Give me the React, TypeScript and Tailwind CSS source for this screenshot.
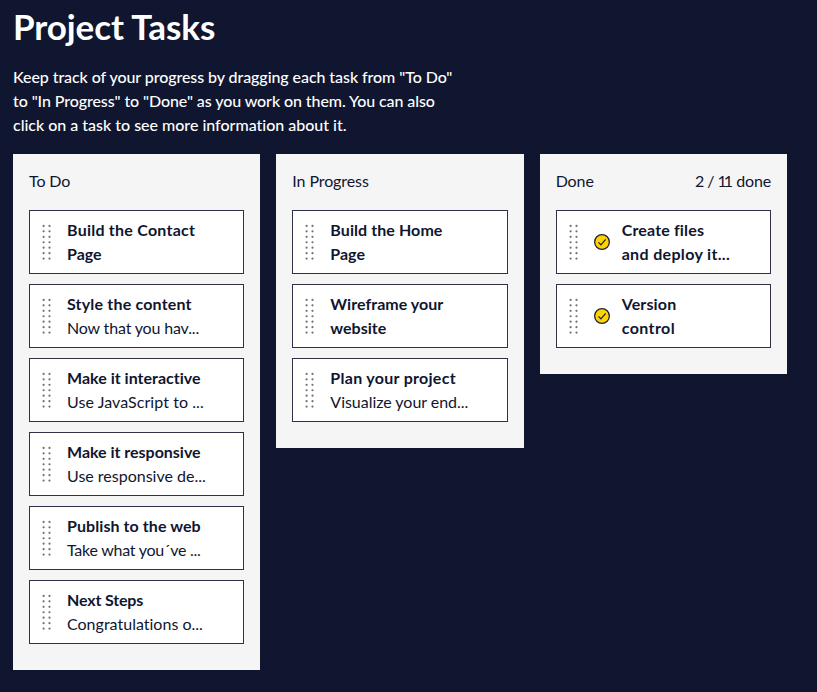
import React from "react";

type Line = { text: string; className?: string };
type Task = { title: Line[]; note?: Line; done?: boolean };

const todo: Task[] = [
  { title: [{ text: "Build the Contact", className: "tracking-[0.24px]" }, { text: "Page" }] },
  {
    title: [{ text: "Style the content", className: "tracking-[0.18px]" }],
    note: { text: "Now that you hav...", className: "tracking-[-0.16px]" },
  },
  {
    title: [{ text: "Make it interactive", className: "tracking-[0.01px]" }],
    note: { text: "Use JavaScript to ...", className: "tracking-[0.07px]" },
  },
  {
    title: [{ text: "Make it responsive", className: "tracking-[-0.02px]" }],
    note: { text: "Use responsive de..." },
  },
  {
    title: [{ text: "Publish to the web", className: "tracking-[0.08px]" }],
    note: { text: "Take what you´ve ...", className: "tracking-[-0.25px]" },
  },
  {
    title: [{ text: "Next Steps", className: "tracking-[-0.15px]" }],
    note: { text: "Congratulations o...", className: "tracking-[0.01px]" },
  },
];

const inProgress: Task[] = [
  { title: [{ text: "Build the Home", className: "tracking-[0.08px]" }, { text: "Page" }] },
  { title: [{ text: "Wireframe your", className: "tracking-[0.04px]" }, { text: "website" }] },
  {
    title: [{ text: "Plan your project", className: "tracking-[0.29px]" }],
    note: { text: "Visualize your end...", className: "tracking-[-0.03px]" },
  },
];

const done: Task[] = [
  {
    title: [
      { text: "Create files", className: "tracking-[0.16px]" },
      { text: "and deploy it...", className: "tracking-[0.34px]" },
    ],
    done: true,
  },
  {
    title: [
      { text: "Version", className: "tracking-[0.15px]" },
      { text: "control", className: "tracking-[0.42px]" },
    ],
    done: true,
  },
];

function Grip() {
  return (
    <svg width="10" height="38" viewBox="0 0 10 38" className="ml-3 shrink-0" fill="#707075">
      {[0, 1, 2, 3, 4, 5, 6].map((r) => (
        <g key={r}>
          <circle cx="1.6" cy={2.9 + r * 5.45} r="1.1" />
          <circle cx="7.5" cy={2.9 + r * 5.45} r="1.1" />
        </g>
      ))}
    </svg>
  );
}

function Check() {
  return (
    <svg width="16" height="16" viewBox="0 0 16 16" className="ml-[15px] shrink-0" fill="none">
      <circle cx="8" cy="8" r="7.35" fill="#ffd300" stroke="#1f2238" strokeWidth="1.3" />
      <path d="M4.4 8.4 6.9 10.8 11.7 5.3" stroke="#1f2238" strokeWidth="1.2" />
    </svg>
  );
}

function Card({ task }: { task: Task }) {
  return (
    <li className="flex h-16 items-center border border-[#2e3148] bg-white">
      <Grip />
      {task.done && <Check />}
      <div className={task.done ? "ml-3 whitespace-nowrap" : "ml-[15px] whitespace-nowrap"}>
        {task.title.map((l) => (
          <div key={l.text} className="font-bold">
            <span className={l.className}>{l.text}</span>
          </div>
        ))}
        {task.note && (
          <div>
            <span className={task.note.className}>{task.note.text}</span>
          </div>
        )}
      </div>
    </li>
  );
}

function Column({ name, count, tasks }: { name: string; count?: React.ReactNode; tasks: Task[] }) {
  return (
    <section className="bg-[#f5f5f5] px-4 pt-[15px] pb-[26px]">
      <header className="mb-[17px] flex justify-between tracking-[-0.1px]">
        <h2>{name}</h2>
        {count && <span>{count}</span>}
      </header>
      <ul className="flex flex-col gap-2.5">
        {tasks.map((t) => (
          <Card key={t.title[0].text} task={t} />
        ))}
      </ul>
    </section>
  );
}

export default function App() {
  return (
    <main className="h-[692px] overflow-hidden bg-[#10162f] pl-[13px] font-[Lato,sans-serif] text-base leading-6 text-[#10162f]">
      <h1 className="pt-0.5 text-[35px] leading-[48px] font-bold tracking-[-0.08px] text-white">Project Tasks</h1>
      <p className="mt-[15px] whitespace-nowrap font-medium text-white">
        <span className="tracking-[-0.07px]">Keep track of your progress by dragging each task from "To Do"</span>
        <br />
        <span className="tracking-[-0.085px]">to "In Progress" to "Done" as you work on them. You can also</span>
        <br />
        <span className="tracking-[-0.01px]">click on a task to see more information about it.</span>
      </p>
      <div className="mt-[17px] grid w-[774px] grid-cols-3 items-start gap-4">
        <Column name="To Do" tasks={todo} />
        <Column name="In Progress" tasks={inProgress} />
        <Column
          name="Done"
          count={
            <>
              <span className="tracking-[-0.6px]">2 / </span>
              <span className="tracking-[-3px]">11</span>
              <span className="pl-[2.5px] tracking-[-0.2px]"> done</span>
            </>
          }
          tasks={done}
        />
      </div>
    </main>
  );
}
